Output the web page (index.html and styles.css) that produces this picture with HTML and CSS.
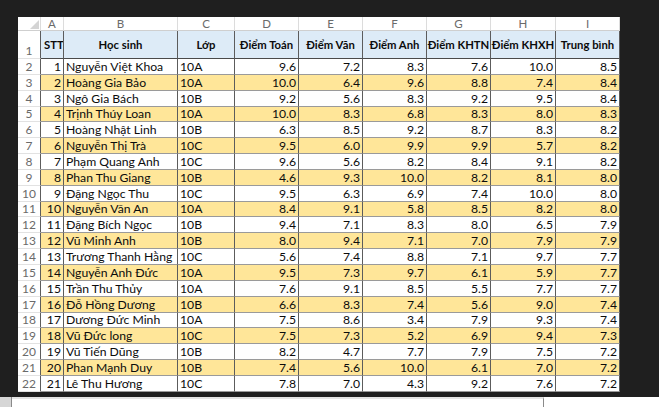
FILE: index.html
```html
<!DOCTYPE html>
<html lang="vi">
<head>
<meta charset="utf-8">
<title>Bảng điểm</title>
<link rel="stylesheet" href="styles.css">
</head>
<body>
<div class="app">
  <div class="sheet">
    <div class="row">
      <div class="cell ch corner"><span class="tri"></span></div>
      <div class="cell ch">A</div><div class="cell ch">B</div><div class="cell ch">C</div><div class="cell ch">D</div><div class="cell ch">E</div><div class="cell ch">F</div><div class="cell ch">G</div><div class="cell ch">H</div><div class="cell ch">I</div>
    </div>
    <div class="row">
      <div class="cell rh">1</div>
      <div class="cell hd stt">STT</div><div class="cell hd">Học sinh</div><div class="cell hd">Lớp</div><div class="cell hd">Điểm Toán</div><div class="cell hd">Điểm Văn</div><div class="cell hd">Điểm Anh</div><div class="cell hd">Điểm KHTN</div><div class="cell hd">Điểm KHXH</div><div class="cell hd">Trung bình</div>
    </div>
    <div class="row"><div class="cell rh">2</div><div class="cell num">1</div><div class="cell">Nguyễn Việt Khoa</div><div class="cell">10A</div><div class="cell num">9.6</div><div class="cell num">7.2</div><div class="cell num">8.3</div><div class="cell num">7.6</div><div class="cell num">10.0</div><div class="cell num">8.5</div></div>
    <div class="row y"><div class="cell rh">3</div><div class="cell num">2</div><div class="cell">Hoàng Gia Bảo</div><div class="cell">10A</div><div class="cell num">10.0</div><div class="cell num">6.4</div><div class="cell num">9.6</div><div class="cell num">8.8</div><div class="cell num">7.4</div><div class="cell num">8.4</div></div>
    <div class="row"><div class="cell rh">4</div><div class="cell num">3</div><div class="cell">Ngô Gia Bách</div><div class="cell">10B</div><div class="cell num">9.2</div><div class="cell num">5.6</div><div class="cell num">8.3</div><div class="cell num">9.2</div><div class="cell num">9.5</div><div class="cell num">8.4</div></div>
    <div class="row y"><div class="cell rh">5</div><div class="cell num">4</div><div class="cell">Trịnh Thúy Loan</div><div class="cell">10A</div><div class="cell num">10.0</div><div class="cell num">8.3</div><div class="cell num">6.8</div><div class="cell num">8.3</div><div class="cell num">8.0</div><div class="cell num">8.3</div></div>
    <div class="row"><div class="cell rh">6</div><div class="cell num">5</div><div class="cell">Hoàng Nhật Linh</div><div class="cell">10B</div><div class="cell num">6.3</div><div class="cell num">8.5</div><div class="cell num">9.2</div><div class="cell num">8.7</div><div class="cell num">8.3</div><div class="cell num">8.2</div></div>
    <div class="row y"><div class="cell rh">7</div><div class="cell num">6</div><div class="cell">Nguyễn Thị Trà</div><div class="cell">10C</div><div class="cell num">9.5</div><div class="cell num">6.0</div><div class="cell num">9.9</div><div class="cell num">9.9</div><div class="cell num">5.7</div><div class="cell num">8.2</div></div>
    <div class="row"><div class="cell rh">8</div><div class="cell num">7</div><div class="cell">Phạm Quang Anh</div><div class="cell">10C</div><div class="cell num">9.6</div><div class="cell num">5.6</div><div class="cell num">8.2</div><div class="cell num">8.4</div><div class="cell num">9.1</div><div class="cell num">8.2</div></div>
    <div class="row y"><div class="cell rh">9</div><div class="cell num">8</div><div class="cell">Phan Thu Giang</div><div class="cell">10B</div><div class="cell num">4.6</div><div class="cell num">9.3</div><div class="cell num">10.0</div><div class="cell num">8.2</div><div class="cell num">8.1</div><div class="cell num">8.0</div></div>
    <div class="row"><div class="cell rh">10</div><div class="cell num">9</div><div class="cell">Đặng Ngọc Thu</div><div class="cell">10C</div><div class="cell num">9.5</div><div class="cell num">6.3</div><div class="cell num">6.9</div><div class="cell num">7.4</div><div class="cell num">10.0</div><div class="cell num">8.0</div></div>
    <div class="row y"><div class="cell rh">11</div><div class="cell num">10</div><div class="cell">Nguyễn Văn An</div><div class="cell">10A</div><div class="cell num">8.4</div><div class="cell num">9.1</div><div class="cell num">5.8</div><div class="cell num">8.5</div><div class="cell num">8.2</div><div class="cell num">8.0</div></div>
    <div class="row"><div class="cell rh">12</div><div class="cell num">11</div><div class="cell">Đặng Bích Ngọc</div><div class="cell">10B</div><div class="cell num">9.4</div><div class="cell num">7.1</div><div class="cell num">8.3</div><div class="cell num">8.0</div><div class="cell num">6.5</div><div class="cell num">7.9</div></div>
    <div class="row y"><div class="cell rh">13</div><div class="cell num">12</div><div class="cell">Vũ Minh Anh</div><div class="cell">10B</div><div class="cell num">8.0</div><div class="cell num">9.4</div><div class="cell num">7.1</div><div class="cell num">7.0</div><div class="cell num">7.9</div><div class="cell num">7.9</div></div>
    <div class="row"><div class="cell rh">14</div><div class="cell num">13</div><div class="cell">Trương Thanh Hằng</div><div class="cell">10C</div><div class="cell num">5.6</div><div class="cell num">7.4</div><div class="cell num">8.8</div><div class="cell num">7.1</div><div class="cell num">9.7</div><div class="cell num">7.7</div></div>
    <div class="row y"><div class="cell rh">15</div><div class="cell num">14</div><div class="cell">Nguyễn Anh Đức</div><div class="cell">10A</div><div class="cell num">9.5</div><div class="cell num">7.3</div><div class="cell num">9.7</div><div class="cell num">6.1</div><div class="cell num">5.9</div><div class="cell num">7.7</div></div>
    <div class="row"><div class="cell rh">16</div><div class="cell num">15</div><div class="cell">Trần Thu Thủy</div><div class="cell">10A</div><div class="cell num">7.6</div><div class="cell num">9.1</div><div class="cell num">8.5</div><div class="cell num">5.5</div><div class="cell num">7.7</div><div class="cell num">7.7</div></div>
    <div class="row y"><div class="cell rh">17</div><div class="cell num">16</div><div class="cell">Đỗ Hồng Dương</div><div class="cell">10B</div><div class="cell num">6.6</div><div class="cell num">8.3</div><div class="cell num">7.4</div><div class="cell num">5.6</div><div class="cell num">9.0</div><div class="cell num">7.4</div></div>
    <div class="row"><div class="cell rh">18</div><div class="cell num">17</div><div class="cell">Dương Đức Minh</div><div class="cell">10A</div><div class="cell num">7.5</div><div class="cell num">8.6</div><div class="cell num">3.4</div><div class="cell num">7.9</div><div class="cell num">9.3</div><div class="cell num">7.4</div></div>
    <div class="row y"><div class="cell rh">19</div><div class="cell num">18</div><div class="cell">Vũ Đức long</div><div class="cell">10C</div><div class="cell num">7.5</div><div class="cell num">7.3</div><div class="cell num">5.2</div><div class="cell num">6.9</div><div class="cell num">9.4</div><div class="cell num">7.3</div></div>
    <div class="row"><div class="cell rh">20</div><div class="cell num">19</div><div class="cell">Vũ Tiến Dũng</div><div class="cell">10B</div><div class="cell num">8.2</div><div class="cell num">4.7</div><div class="cell num">7.7</div><div class="cell num">7.9</div><div class="cell num">7.5</div><div class="cell num">7.2</div></div>
    <div class="row y"><div class="cell rh">21</div><div class="cell num">20</div><div class="cell">Phan Mạnh Duy</div><div class="cell">10B</div><div class="cell num">7.4</div><div class="cell num">5.6</div><div class="cell num">10.0</div><div class="cell num">6.1</div><div class="cell num">7.0</div><div class="cell num">7.2</div></div>
    <div class="row"><div class="cell rh">22</div><div class="cell num">21</div><div class="cell">Lê Thu Hương</div><div class="cell">10C</div><div class="cell num">7.8</div><div class="cell num">7.0</div><div class="cell num">4.3</div><div class="cell num">9.2</div><div class="cell num">7.6</div><div class="cell num">7.2</div></div>
  </div>
  <div class="statusbar">
    <div class="sb-box"></div>
    <div class="sb-field"></div>
    <div class="sb-rest"></div>
  </div>
</div>
</body>
</html>
```

FILE: styles.css
```css
html, body {
  margin: 0;
  padding: 0;
}
body {
  background: #1f1f1f;
  width: 659px;
  height: 407px;
  overflow: hidden;
}
.app {
  display: flex;
  flex-direction: column;
  padding-top: 17px;
}
.sheet {
  margin-left: 18px;
  width: 602px;
  display: grid;
  grid-template-columns: 23px 23px 114px 57px 64px 64px 64px 64px 65px 64px;
  grid-template-rows: 14px 28px repeat(21, 15.857px);
  background: #ffffff;
  font-family: Lato, "Noto Sans", sans-serif;
  font-size: 12.2px;
  color: #0c0c0c;
}
.row {
  display: contents;
}
.cell {
  box-sizing: border-box;
  display: flex;
  align-items: flex-end;
  padding: 0 2px 0 2px;
  border-right: 1px solid #5c5c5c;
  border-bottom: 1px solid #9a9a9a;
  white-space: nowrap;
  overflow: hidden;
  line-height: 15px;
}
.num {
  justify-content: flex-end;
}
.y .cell {
  background: #ffe699;
}
.y .rh {
  background: #ffffff;
}
.ch {
  justify-content: center;
  align-items: center;
  color: #6a6a6a;
  font-size: 11.5px;
  line-height: 13px;
  border-right: 1px solid #dcdcdc;
  border-bottom: 1px solid #cfcfcf;
}
.corner {
  justify-content: flex-end;
  align-items: flex-end;
  padding: 0 1px 1px 0;
}
.tri {
  display: block;
  width: 9px;
  height: 9px;
  background: #d4d4d4;
  clip-path: polygon(100% 0, 100% 100%, 0 100%);
}
.rh {
  justify-content: center;
  color: #6a6a6a;
  font-size: 12px;
  border-right: 1px solid #5c5c5c;
  border-bottom: 1px solid #e2e2e2;
  padding: 0;
}
.hd {
  background: #ddebf7;
  font-weight: bold;
  font-size: 11.3px;
  justify-content: center;
  align-items: center;
  border-bottom: 1px solid #4a4a4a;
}
.stt {
  justify-content: flex-start;
  padding-left: 3px;
}
.statusbar {
  margin-top: 5px;
  height: 10px;
  display: flex;
  background: #ffffff;
}
.sb-box {
  width: 11px;
  background: #d6d6d6;
  border-right: 1px solid #8a8a8a;
}
.sb-field {
  width: 531px;
  border-top: 2px solid #e4e4e4;
  border-right: 1px solid #8a8a8a;
}
.sb-rest {
  flex: 1;
  background: #ffffff;
}
```
